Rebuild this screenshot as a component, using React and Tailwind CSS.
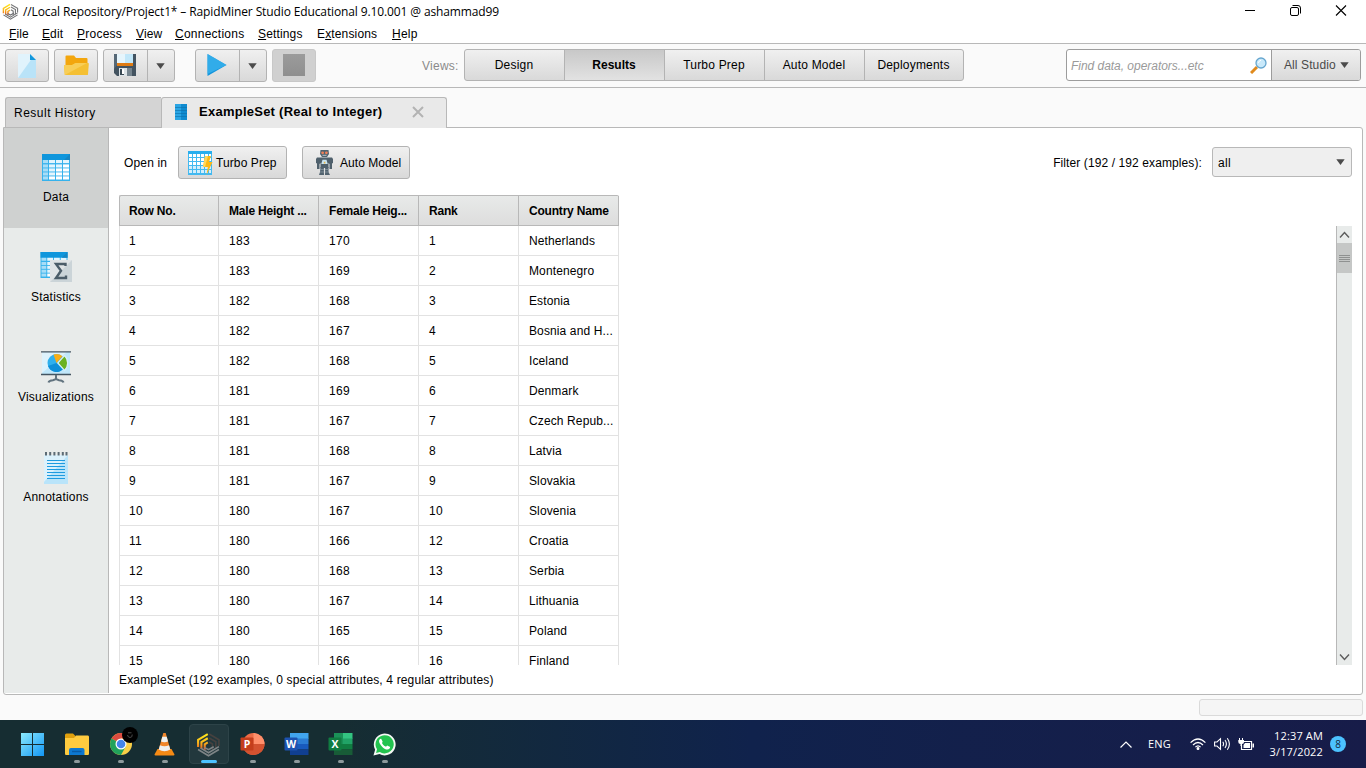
import React from "react";

const countries = [
  [1, 183, 170, 1, "Netherlands"],
  [2, 183, 169, 2, "Montenegro"],
  [3, 182, 168, 3, "Estonia"],
  [4, 182, 167, 4, "Bosnia and H..."],
  [5, 182, 168, 5, "Iceland"],
  [6, 181, 169, 6, "Denmark"],
  [7, 181, 167, 7, "Czech Repub..."],
  [8, 181, 168, 8, "Latvia"],
  [9, 181, 167, 9, "Slovakia"],
  [10, 180, 167, 10, "Slovenia"],
  [11, 180, 166, 12, "Croatia"],
  [12, 180, 168, 13, "Serbia"],
  [13, 180, 167, 14, "Lithuania"],
  [14, 180, 165, 15, "Poland"],
  [15, 180, 166, 16, "Finland"],
];

const btn = "flex h-[33px] items-center rounded-[3px] border border-[#b3b3b3] bg-linear-to-b from-[#f0f0f0] to-[#d9d9d9]";

function Caret({ className = "" }) {
  return (
    <svg width="9" height="6" viewBox="0 0 9 6" className={className}>
      <path d="M0.3 0.3H8.7L4.5 6Z" fill="#4b4b4b" />
    </svg>
  );
}

function MinerLogo({ size, dark }) {
  const id = dark ? "flameDark" : "flame";
  const right = dark ? "#46413f" : "#77787a";
  const low = dark ? "#7f8587" : "#6e6f72";
  return (
    <svg width={size} height={size} viewBox="0 0 24 24" fill="none" strokeWidth="2">
      <defs>
        <linearGradient id={id} gradientUnits="userSpaceOnUse" x1="0" y1="3" x2="0" y2="17">
          <stop stopColor="#ffe31a" />
          <stop offset=".5" stopColor="#f9b71b" />
          <stop offset="1" stopColor="#e9561f" />
        </linearGradient>
      </defs>
      <path d="M2 14.5V7.5L11.3 2M5.2 16V9.6L11.3 6M8.4 17V11.8L11.3 10" stroke={`url(#${id})`} />
      <path d="M12.7 2L22 7.5V13.5M12.7 5.7L19 9.3V15.5M12.7 9.6L15.8 11.5V17" stroke={right} strokeWidth="1.6" />
      <path d="M2 16.8L12 22.8L22 16.8M4.5 15.5L12 19.9L22 14M8 14.7L12 17L17 14.2" stroke={low} strokeWidth="1.5" />
    </svg>
  );
}

function NewIcon() {
  return (
    <svg width="18" height="24" viewBox="0 0 18 24">
      <path d="M0 0H12L18 6V24H0Z" fill="#b9e3f8" />
      <path d="M0 0H12L15 3L0 24Z" fill="#e1f3fc" />
      <path d="M12 0L18 6H12Z" fill="#1397dc" />
    </svg>
  );
}

function OpenIcon() {
  return (
    <svg width="25" height="21" viewBox="0 0 25 21">
      <path d="M1.5 20V1.5Q1.5 .5 2.5 .5H10L12 3H22.5Q23.5 3 23.5 4V20Z" fill="#f3a60d" />
      <path d="M.8 20L0 11Q0 10 1 10H8L11.5 8H24Q25 8 24.8 9L24 19Q24 20 23 20Z" fill="#f5c033" />
      <path d="M.8 20L0 11Q0 10 1 10H8L11.5 8H23Z" fill="#f8ce57" />
    </svg>
  );
}

function SaveIcon() {
  return (
    <svg width="22" height="22" viewBox="0 0 22 22">
      <path d="M0 0H22V22H3L0 19Z" fill="#435360" />
      <path d="M0 0H11L0 15Z" fill="#5e7280" opacity=".7" />
      <path d="M3 0H19V9H3Z" fill="#c2e7f9" />
      <path d="M3 0H11V9H3Z" fill="#e6f5fc" />
      <path d="M3 9H19V12H3Z" fill="#df7b12" />
      <path d="M5 14H18V22H5Z" fill="#dbe2e6" />
      <path d="M13 14H18V22H13Z" fill="#75848e" />
      <path d="M6 15H10V21H6Z" fill="#384853" />
      <path d="M8 15H10V20H8Z" fill="#fff" />
    </svg>
  );
}

function RunIcon() {
  return (
    <svg width="20" height="22" viewBox="0 0 20 22">
      <path d="M.5 0L19.5 11L.5 22Z" fill="#1294dc" />
      <path d="M.5 0L19.5 11L.5 20Z" fill="#3cb4ee" opacity=".75" />
    </svg>
  );
}

function SheetCells() {
  return (
    <>
      <path d="M0 0H28V27H0Z" fill="#36b2ec" />
      <path d="M0 0H28V6H0Z" fill="#0f96dc" />
      {[6, 10, 14, 18, 22].map((y) =>
        [1, 7, 14, 21].map((x) => (
          <rect key={x + "-" + y} x={x} y={y + (y === 6 ? 0 : 0.4)} width={x === 1 ? 5 : 6} height="3.1" fill={x === 1 ? "#a7ddf7" : x + y < 28 ? "#e4f5fd" : "#fff"} />
        ))
      )}
      <path d="M22 6L28 0V6Z" fill="#1586c4" />
    </>
  );
}

function SheetIcon() {
  return (
    <svg width="28" height="27" viewBox="0 0 28 27">
      <SheetCells />
    </svg>
  );
}

function StatisticsIcon() {
  return (
    <svg width="32" height="30" viewBox="0 0 32 30">
      <svg width="28" height="26" viewBox="0 0 28 27">
        <SheetCells />
      </svg>
      <path d="M10 8H32V30H10Z" fill="#e0e4e6" />
      <path d="M32 8V30H10Z" fill="#cbd4d8" />
      <path d="M25.5 14V12H16L21 18.8L16 26H26V23.5" fill="none" stroke="#4c5d69" strokeWidth="2.4" />
    </svg>
  );
}

function VisualizationsIcon() {
  return (
    <svg width="30" height="33" viewBox="0 0 30 33">
      <path d="M1 1H29V24H1Z" fill="#c0e7fa" />
      <path d="M1 1H26L1 22Z" fill="#ddf2fc" />
      <path d="M0 .8H30M0 23.5H30" stroke="#435562" strokeWidth="1.3" />
      <circle cx="15.5" cy="12" r="9" fill="#2fb0ed" />
      <path d="M15.5 12L7 15A9 9 0 0 0 21.8 18.4Z" fill="#0e8fd8" />
      <path d="M15.5 12L12.5 3.5A9 9 0 0 1 21.5 5.3Z" fill="#f8ad14" />
      <path d="M16.8 12L23.5 4.5A10.5 10.5 0 0 1 23.5 19.5Z" fill="#69b222" stroke="#d7effb" strokeWidth="1.2" />
      <path d="M15 24V28M7.5 31.5Q8 29.5 12 29.2L15 28L18 29.2Q22 29.5 22.5 31.5" fill="none" stroke="#61737f" strokeWidth="2" />
    </svg>
  );
}

function AnnotationsIcon() {
  return (
    <svg width="24" height="33" viewBox="0 0 24 33">
      <path d="M0 4H24V33H0Z" fill="#b9e4fa" />
      <path d="M0 4H24L0 31Z" fill="#dbf1fc" />
      <path d="M2 1V4.5M6.2 1V4.5M10.4 1V4.5M14.6 1V4.5M18.8 1V4.5M22.5 1V4.5" stroke="#5c6b75" strokeWidth="2" />
      <path d="M3 9.5H21M3 12.5H21M3 15.5H21M3 18.5H21M3 21.5H21M3 24.5H21M3 27.5H21" stroke="#1d9be0" />
    </svg>
  );
}

function TurboIcon() {
  return (
    <svg width="25" height="24" viewBox="0 0 25 24" className="shrink-0">
      <path d="M0 0H24V24H0Z" fill="#43b9f0" />
      <path d="M0 0H24V3H0Z" fill="#28aeee" />
      {[3, 7, 11, 15, 19].map((y) =>
        [1, 5, 9, 13, 17, 21].map((x) => (
          <rect key={x + "-" + y} x={x} y={y} width={x === 21 ? 2 : 3} height="3" fill={y > 14 ? "#d4eefb" : "#fff"} />
        ))
      )}
      <path d="M17 5H23L21 11H24.5L18.5 24L19.8 16H15Z" fill="#fbb917" />
      <path d="M17 5H20L17 16H15Z" fill="#ffd75c" />
    </svg>
  );
}

function RobotIcon() {
  return (
    <svg width="17" height="25" viewBox="0 0 17 25" className="shrink-0">
      <path d="M4.5 0H12.5L13 4L11 7H6L4 4Z" fill="#52636f" />
      <circle cx="6.6" cy="2.8" r="1.4" fill="#ef8059" />
      <circle cx="10.4" cy="2.8" r="1.4" fill="#ef8059" />
      <path d="M6.5 5.3H10.5" stroke="#b8c3c9" />
      <path d="M1 7.5H16L17 9V13L16 13.5V19H13.5V14L12.5 13V18H4.5V13L3.5 14V19H1V13.5L0 13V9Z" fill="#4f606c" />
      <path d="M5.3 14L6.5 9.8H10.5L11.7 14Z" fill="#c9e4f1" />
      <path d="M7.8 11.8H9.4V13.4H7.8Z" fill="#e6b54a" />
      <path d="M4.5 17H7.9V22L8 25H3L4 22ZM9.1 17H12.5V22L14 25H9L9.1 22Z" fill="#52636f" />
      <path d="M4 19.5H8M9 19.5H13M4 22H8M9 22H13" stroke="#8795a0" strokeWidth=".8" />
    </svg>
  );
}

function ViewTab({ children, active, last }) {
  return (
    <div
      className={
        "flex h-full items-center justify-center pr-px text-[12px] text-black " +
        (last ? "w-[98px] " : "w-[100px] border-r border-[#b3b3b3] ") +
        (active ? "bg-linear-to-b from-[#c8c8c8] to-[#e2e2e2] font-bold" : "tracking-[0.2px]")
      }
    >
      {children}
    </div>
  );
}

function SideItem({ icon, label, active }) {
  return (
    <div className={"flex h-[100px] flex-col items-center " + (active ? "bg-[#cfd1d0]" : "")}>
      <div className="flex h-[61px] items-end justify-center pb-[6px] pt-6">
        <div className="flex h-8 items-center">{icon}</div>
      </div>
      <div className="text-[12px] leading-4 tracking-[0.2px]">{label}</div>
    </div>
  );
}

function TaskItem({ children, active, dot = true }) {
  return (
    <div className={"flex h-10 w-10 flex-col items-center rounded border " + (active ? "border-[#2d4348] bg-[#22383d]" : "border-transparent")}>
      <div className="flex h-[35px] items-center justify-center pt-[3px]">{children}</div>
      {dot && <div className={active ? "h-[3px] w-4 rounded-full bg-[#4cc2ff]" : "h-[3px] w-[6px] rounded-full bg-[#8d999c]"} />}
    </div>
  );
}

function WindowsIcon() {
  return (
    <svg width="23" height="23" viewBox="0 0 23 23">
      <defs>
        <linearGradient id="win" x1="0" y1="0" x2="1" y2="1">
          <stop stopColor="#8beafd" />
          <stop offset="1" stopColor="#1296f5" />
        </linearGradient>
      </defs>
      <path d="M0 0H11V11H0ZM12 0H23V11H12ZM0 12H11V23H0ZM12 12H23V23H12Z" fill="url(#win)" />
    </svg>
  );
}

function FolderTask() {
  return (
    <svg width="24" height="23" viewBox="0 0 24 23">
      <path d="M0 2Q0 .5 1.5 .5H8L10.5 3V7H0Z" fill="#dfa00d" />
      <path d="M0 5H9L11 2.5H23Q24 2.5 24 4V20.5Q24 22 23 22H1Q0 22 0 20.5Z" fill="#fecb3f" />
      <path d="M4 22V17Q4 15 6 15H17.5Q19.5 15 19.5 17V22Z" fill="#0d78cf" />
      <path d="M7 18.5H16.5" stroke="#085aa4" strokeWidth="1.4" />
    </svg>
  );
}

function ChromeTask() {
  return (
    <div className="relative">
      <svg width="24" height="24" viewBox="0 0 24 24">
        <circle cx="12" cy="12" r="11" fill="#f9cf47" />
        <path d="M12 12L2.5 6.5A11 11 0 0 1 21.5 6.5H12Z" fill="#dc4c40" />
        <path d="M12 12L2.5 6.5A11 11 0 0 0 12 23L17 14Z" fill="#21a25b" />
        <circle cx="12" cy="12" r="5.5" fill="#fff" />
        <circle cx="12" cy="12" r="4.3" fill="#4385ec" />
      </svg>
      <div className="absolute -top-[5px] left-[13px] flex h-4 w-4 items-center justify-center rounded-full bg-black">
        <svg width="6" height="6" viewBox="0 0 6 6" fill="none" stroke="#4a4a4a">
          <path d="M.5 3Q1 5.5 3 5.5Q5.5 5.5 5.2 2.5M1 .8H4.5" />
        </svg>
      </div>
    </div>
  );
}

function VlcTask() {
  return (
    <svg width="21" height="24" viewBox="0 0 21 24">
      <path d="M3.5 17H17.5L20.5 22.5Q20.5 23.5 19.5 23.5H1.5Q.5 23.5 .5 22.5Z" fill="#f58a14" />
      <path d="M9.3 1H11.7L16.5 18Q10.5 21.5 4.5 18Z" fill="#f1862a" />
      <path d="M8.3 4.8H12.7L14 9.5Q10.5 11 7 9.5ZM6 13.2Q10.5 15.2 15 13.2L16.3 17.5Q10.5 21 4.7 17.5Z" fill="#eef0f0" />
    </svg>
  );
}

function OfficeTask({ letter, kind }) {
  const c = kind === "word" ? ["#41a5ee", "#2b7cd3", "#185abd", "#103f91", "#1c52b0"] : ["#33c481", "#21a366", "#107c41", "#185c37", "#107c41"];
  return (
    <svg width="25" height="24" viewBox="0 0 25 24">
      {kind === "ppt" ? (
        <>
          <circle cx="13.5" cy="12" r="11" fill="#ed6c47" />
          <path d="M13.5 1A11 11 0 0 1 24.5 12H13.5Z" fill="#ff8f6b" />
          <path d="M2.5 12H24.5A11 11 0 0 1 2.5 12Z" fill="#d35230" />
        </>
      ) : (
        <>
          <path d="M6 1H24.5V7H6Z" fill={c[0]} />
          <path d="M6 6.5H24.5V12H6Z" fill={c[1]} />
          <path d="M6 12H24.5V17.5H6Z" fill={c[2]} />
          <path d="M6 17.5H24.5V23H6Z" fill={c[3]} />
          {kind === "excel" && <path d="M6 1H15V12H6Z" fill="#1b9158" />}
        </>
      )}
      <rect x="0.5" y="5.5" width="13" height="13" rx="1" fill={kind === "ppt" ? "#c43e1c" : c[4]} />
      <text x="7" y="15.8" textAnchor="middle" fontSize="10.5" fontWeight="bold" fill="#fff" fontFamily="Open Sans, sans-serif">
        {letter}
      </text>
    </svg>
  );
}

function WhatsAppTask() {
  return (
    <svg width="23" height="23" viewBox="0 0 24 24">
      <path d="M.5 23.5L2.2 17.4A11.4 11.4 0 1 1 6.8 22Z" fill="#f4f8f4" />
      <path d="M3.2 20.9L4.2 17A9.5 9.5 0 1 1 7.2 19.9Z" fill="#23c34f" />
      <path d="M8.8 6.5C8.4 5.7 7.4 6.2 6.9 6.9C5.2 9.2 7.7 12.6 10 14.8C12.4 17 15.5 18.2 17.3 16.3C18 15.5 18 14.6 17.5 14.3L15.2 13.2C14.3 12.8 14.1 14.6 13.2 14.2C11.6 13.5 10.3 12.1 9.5 10.7C9 9.9 10.4 9.7 10 8.8Z" fill="#fff" />
    </svg>
  );
}

export default function App() {
  return (
    <div className="flex h-[768px] w-[1366px] flex-col overflow-hidden bg-[#fafafa] font-['Liberation_Sans',Arial,sans-serif] text-[12px] text-black">
      <header className="flex h-[22px] shrink-0 items-center justify-between bg-white">
        <div className="flex items-center gap-1 pl-[2px]">
          <MinerLogo size={17} />
          <span className="pt-px font-['Open_Sans',sans-serif] text-[12px] leading-5 tracking-[-0.12px]">//Local Repository/Project1* – RapidMiner Studio Educational 9.10.001 @ ashammad99</span>
        </div>
        <svg width="104" height="14" viewBox="0 0 104 14" className="mb-[2px] mr-[18px] shrink-0" fill="none" stroke="#000">
          <path d="M1 7.5H11" />
          <rect x="46.5" y="4.5" width="8" height="8" rx="1.5" />
          <path d="M48.5 2.5H54Q56.5 2.5 56.5 5V10.5" />
          <path d="M92 2.5L102 12.5M102 2.5L92 12.5" strokeWidth="1.1" />
        </svg>
      </header>
      <nav className="flex h-[21px] shrink-0 items-center bg-white pl-[9px] pt-[2px] text-[12px]">
        <span className="w-[33px] tracking-[0.1px]"><u>F</u>ile</span>
        <span className="w-[35px] tracking-[0.1px]"><u>E</u>dit</span>
        <span className="w-[59px] tracking-[0.25px]"><u>P</u>rocess</span>
        <span className="w-[39px] tracking-[0.1px]"><u>V</u>iew</span>
        <span className="w-[83px] tracking-[0.25px]"><u>C</u>onnections</span>
        <span className="w-[59px] tracking-[0.15px]"><u>S</u>ettings</span>
        <span className="w-[75px] tracking-[0.15px]">E<u>x</u>tensions</span>
        <span className="tracking-[0.25px]"><u>H</u>elp</span>
      </nav>

      <div className="flex h-[45px] shrink-0 items-start border-y border-[#b8b8b8] pl-[5px] pr-[5px] pt-[5px]">
        <div className={btn + " w-[44px] justify-center"}><NewIcon /></div>
        <div className={btn + " ml-[5px] w-[44px] justify-center"}><OpenIcon /></div>
        <div className={btn + " ml-[5px] w-[72px]"}>
          <div className="flex h-full w-[44px] items-center border-r border-[#b3b3b3] pl-[10px] pb-[2px]"><SaveIcon /></div>
          <Caret className="ml-2" />
        </div>
        <div className={btn + " ml-5 w-[72px]"}>
          <div className="flex h-full w-[44px] items-center border-r border-[#b3b3b3] pb-px pl-[11px]"><RunIcon /></div>
          <Caret className="ml-2" />
        </div>
        <div className="ml-[5px] flex h-[33px] w-[44px] items-center justify-center rounded-[3px] border border-[#c8c8c8] bg-[#d0d0d0] pb-px">
          <div className="h-[22px] w-[22px] bg-linear-to-b from-[#9b9b9b] to-[#8f8f8f]" />
        </div>
        <span className="ml-[106px] w-[42px] pt-2 tracking-[0.25px] text-[#8a8a8a]">Views:</span>
        <div className="flex h-8 w-[500px] overflow-hidden rounded-[3px] border border-[#b3b3b3] bg-linear-to-b from-[#f0f0f0] to-[#d9d9d9]">
          <ViewTab>Design</ViewTab>
          <ViewTab active>Results</ViewTab>
          <ViewTab>Turbo Prep</ViewTab>
          <ViewTab>Auto Model</ViewTab>
          <ViewTab last>Deployments</ViewTab>
        </div>
        <div className="ml-auto flex h-8 w-[295px] overflow-hidden rounded-[3px] border border-[#9c9c9c] bg-white">
          <div className="flex flex-1 items-center justify-between pl-1 pr-1">
            <span className="pt-px italic tracking-[-0.03px] text-[#9a9a9a]">Find data, operators...etc</span>
            <svg width="17" height="17" viewBox="0 0 17 17">
              <path d="M1 16L7 10" stroke="#e08a1c" strokeWidth="3" />
              <circle cx="11" cy="6" r="5" fill="#c9e9fa" stroke="#66a6cf" strokeWidth="1.3" />
              <path d="M8.5 6A3 3 0 0 1 11 3.3" stroke="#fff" fill="none" />
            </svg>
          </div>
          <div className="flex w-[89px] items-center justify-between border-l border-[#9c9c9c] bg-linear-to-b from-[#f0f0f0] to-[#d9d9d9] pl-3 pr-[11px] text-[#4a4a4a]">
            <span className="tracking-[0.1px]">All Studio</span>
            <Caret />
          </div>
        </div>
      </div>

      <div className="flex h-[39px] shrink-0 items-end pl-[5px]">
        <div className="flex h-[30px] w-[156px] items-center rounded-tl-[3px] border-l border-t border-[#b8b8b8] bg-[#d4d4d4] pl-2 text-[12px] tracking-[0.5px]">Result History</div>
        <div className="z-10 -mb-px flex h-[31px] w-[286px] items-center rounded-t-[3px] border-x border-t border-[#b8b8b8] bg-[#e9e9e9] pl-[13px] pb-[2px]">
          <svg width="12" height="16" viewBox="0 0 12 16">
            <path d="M0 0H6V16H0Z" fill="#2aa5e4" />
            <path d="M6 0H12V16H6Z" fill="#0f8bd0" />
            <path d="M0 3.5H12M0 6.5H12M0 9.5H12M0 12.5H12" stroke="#0c6ea8" strokeWidth=".6" />
          </svg>
          <span className="ml-3 w-[213px] text-[13px] font-bold tracking-[0.25px]">ExampleSet (Real to Integer)</span>
          <svg width="12" height="12" viewBox="0 0 12 12">
            <path d="M1 1L11 11M11 1L1 11" stroke="#b3b3b3" strokeWidth="2" />
          </svg>
        </div>
      </div>

      <main className="mx-[3px] flex h-[568px] shrink-0 overflow-hidden rounded-b-[3px] rounded-tr-[3px] border border-[#b8b8b8] bg-white">
        <aside className="mb-px w-[105px] shrink-0 border-r border-[#b8b8b8] bg-[#e8ebea]">
          <SideItem active label="Data" icon={<SheetIcon />} />
          <SideItem label="Statistics" icon={<StatisticsIcon />} />
          <SideItem label="Visualizations" icon={<VisualizationsIcon />} />
          <SideItem label="Annotations" icon={<AnnotationsIcon />} />
        </aside>
        <section className="flex min-w-0 flex-1 flex-col pl-[10px] pr-[10px]">
          <div className="flex h-[67px] shrink-0 items-start pt-[18px]">
            <span className="ml-[5px] mt-2 w-[54px] tracking-[0.15px]">Open in</span>
            <div className={btn + " w-[109px] gap-[3px] pl-[9px] tracking-[0.1px]"}><TurboIcon />Turbo Prep</div>
            <div className={btn + " ml-[15px] w-[108px] gap-[7px] pl-[13px] tracking-[0.05px]"}><RobotIcon />Auto Model</div>
            <span className="ml-auto mt-2 tracking-[0.1px]">Filter (192 / 192 examples):</span>
            <div className="ml-[10px] mt-px flex h-[30px] w-[140px] items-center justify-between rounded-[3px] border border-[#b8b8b8] bg-[#efefef] pl-[5px] pr-[6px]">
              <span className="pt-px tracking-[0.3px]">all</span>
              <Caret />
            </div>
          </div>
          <div className="flex h-[470px] shrink-0 justify-between overflow-hidden">
            <div>
              <div className="grid h-[31px] w-[500px] grid-cols-[99px_100px_100px_100px_100px] rounded-t-[2px] border-y border-l border-[#b8b8b8] bg-linear-to-b from-[#e8eae9] to-[#dddddd] font-bold tracking-[-0.2px]">
                {["Row No.", "Male Height ...", "Female Heig...", "Rank", "Country Name"].map((h, i) => (
                  <div key={h} className={"flex items-center border-r border-[#b8b8b8] " + (i ? "pl-[10px]" : "pl-[9px]")}>{h}</div>
                ))}
              </div>
              {countries.map((r) => (
                <div key={r[0]} className="grid h-[30px] w-[500px] grid-cols-[99px_100px_100px_100px_100px] border-b border-l border-[#e2e2e2] leading-[10px]">
                  {r.map((c, i) => (
                    <div
                      key={i}
                      className={"flex items-center border-r border-[#e2e2e2] " + (i ? "pl-[10px] " : "pl-[9px] ") + (i === 4 ? "tracking-[0.12px]" : "tracking-[0.3px]")}
                    >
                      {c}
                    </div>
                  ))}
                </div>
              ))}
            </div>
            <div className="mt-[31px] flex w-4 flex-col items-center border-l border-[#b8b8b8] bg-[#e8ebea]">
              <svg width="15" height="17" viewBox="0 0 15 17" fill="none" stroke="#5c5c5c" strokeWidth="1.4"><path d="M3 11.5L7.5 6.5L12 11.5" /></svg>
              <div className="flex h-[30px] w-full flex-col items-center justify-center gap-px bg-[#c5c7c6]">
                <div className="h-px w-[11px] bg-[#8f9190]" />
                <div className="h-px w-[11px] bg-[#8f9190]" />
                <div className="h-px w-[11px] bg-[#8f9190]" />
                <div className="h-px w-[11px] bg-[#8f9190]" />
              </div>
              <svg width="15" height="17" viewBox="0 0 15 17" className="mt-auto" fill="none" stroke="#5c5c5c" strokeWidth="1.4"><path d="M3 6.5L7.5 11.5L12 6.5" /></svg>
            </div>
          </div>
          <div className="pt-[6px] leading-[18px] tracking-[0.15px]">ExampleSet (192 examples, 0 special attributes, 4 regular attributes)</div>
        </section>
      </main>
      <div className="flex h-[25px] shrink-0 justify-end pr-[3px] pt-1">
        <div className="h-[17px] w-[164px] rounded-[3px] border border-[#dadada] bg-[#f5f5f5]" />
      </div>

      <footer className="flex h-12 shrink-0 items-center justify-between bg-linear-to-r from-[#162d32] from-25% via-[#10224c] via-55% to-[#171c49] pr-5 font-['Open_Sans',sans-serif] text-white">
        <div className="flex gap-1 pl-[12.5px]">
          <TaskItem dot={false}><WindowsIcon /></TaskItem>
          <TaskItem><FolderTask /></TaskItem>
          <TaskItem><ChromeTask /></TaskItem>
          <TaskItem><VlcTask /></TaskItem>
          <TaskItem active><MinerLogo size={25} dark /></TaskItem>
          <TaskItem><OfficeTask letter="P" kind="ppt" /></TaskItem>
          <TaskItem><OfficeTask letter="W" kind="word" /></TaskItem>
          <TaskItem><OfficeTask letter="X" kind="excel" /></TaskItem>
          <TaskItem><WhatsAppTask /></TaskItem>
        </div>
        <div className="flex items-center">
          <svg width="12" height="7" viewBox="0 0 12 7" fill="none" stroke="#fff" strokeWidth="1.2"><path d="M.5 6.5L6 1L11.5 6.5" /></svg>
          <span className="ml-4 w-[42px] pt-px text-[11px] tracking-[0.2px]">ENG</span>
          <svg width="16" height="12" viewBox="0 0 16 12" fill="none" stroke="#fff" strokeWidth="1.2">
            <path d="M.6 4.6Q8-2.6 15.4 4.6M3 7Q8 2 13 7M5.4 9.2Q8 6.4 10.6 9.2" />
            <circle cx="8" cy="10.5" r=".9" fill="#fff" />
          </svg>
          <svg width="17" height="14" viewBox="0 0 17 14" className="ml-2" fill="none" stroke="#fff" strokeWidth="1.1">
            <path d="M.6 5V9H3L6.5 12.3V1.7L3 5Z" />
            <path d="M8.8 4.8Q10.3 7 8.8 9.2M11 3Q13.8 7 11 11M13.3 1.2Q17.5 7 13.3 12.8" />
          </svg>
          <svg width="17" height="13" viewBox="0 0 17 13" className="ml-[7px]">
            <path d="M6 3.5H13.5V11.5H3.5V7" fill="none" stroke="#fff" strokeWidth="1.2" />
            <path d="M7 5H12V10H5.5V7ZM14.5 5.5H16V9.5H14.5ZM1 0H2V2H4V0H5V2H6V4Q6 6 4 6V8H2.5V6Q.3 6 .3 4V2H1Z" fill="#fff" />
          </svg>
          <div className="ml-[10px] w-[58px] text-right text-[11px] leading-4 tracking-[0.15px]">
            <div className="whitespace-nowrap">12:37 AM</div>
            <div>3/17/2022</div>
          </div>
          <div className="ml-[7px] flex h-4 w-4 items-center justify-center rounded-full bg-[#4cc2ff] text-[10px] leading-none text-[#14283a]">8</div>
        </div>
      </footer>
    </div>
  );
}
